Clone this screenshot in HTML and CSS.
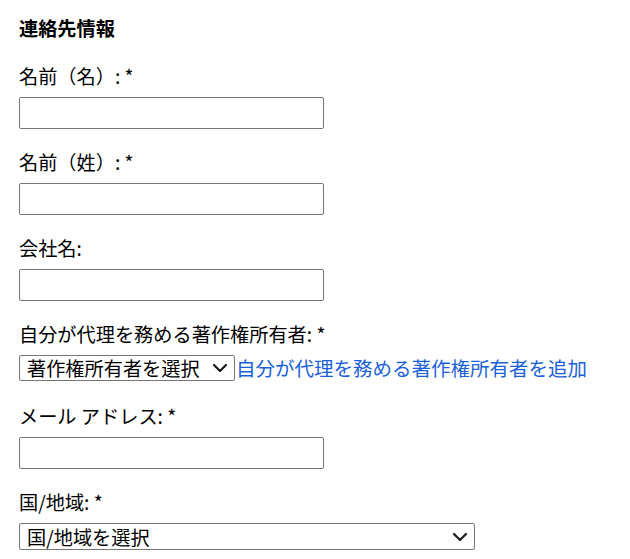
FILE: index.html
```html
<!DOCTYPE html>
<html lang="ja">
<head>
<meta charset="utf-8">
<title>連絡先情報</title>
<link rel="stylesheet" href="styles.css">
</head>
<body>
<form class="form">
  <h2 class="heading">連絡先情報</h2>
  <div class="field">
    <label class="label" for="fn">名前（名）: *</label>
    <input class="text-input" id="fn" type="text">
  </div>
  <div class="field">
    <label class="label" for="ln">名前（姓）: *</label>
    <input class="text-input" id="ln" type="text">
  </div>
  <div class="field">
    <label class="label" for="co">会社名:</label>
    <input class="text-input" id="co" type="text">
  </div>
  <div class="field">
    <label class="label" for="owner">自分が代理を務める著作権所有者: *</label>
    <div class="owner-row">
      <div class="select-wrap">
        <select class="select owner-select" id="owner">
          <option>著作権所有者を選択</option>
        </select>
        <svg class="chevron" width="14" height="8" viewBox="0 0 14 8" aria-hidden="true"><path d="M1 1 L7 7 L13 1" fill="none" stroke="#1a1a1a" stroke-width="2.2" stroke-linecap="round" stroke-linejoin="round"/></svg>
      </div><a class="add-link" href="#">自分が代理を務める著作権所有者を追加</a>
    </div>
  </div>
  <div class="field">
    <label class="label" for="em">メール アドレス: *</label>
    <input class="text-input" id="em" type="email">
  </div>
  <div class="field">
    <label class="label" for="ct">国/地域: *</label>
    <div class="select-wrap">
      <select class="select country-select" id="ct">
        <option>国/地域を選択</option>
      </select>
      <svg class="chevron" width="14" height="8" viewBox="0 0 14 8" aria-hidden="true"><path d="M1 1 L7 7 L13 1" fill="none" stroke="#1a1a1a" stroke-width="2.2" stroke-linecap="round" stroke-linejoin="round"/></svg>
    </div>
  </div>
</form>
</body>
</html>
```
FILE: styles.css
```css
html, body {
  margin: 0;
  padding: 0;
  background: #ffffff;
}

body {
  font-family: "Noto Sans CJK JP", "Noto Sans", sans-serif;
  font-size: 19.2px;
  color: #000000;
}

.form {
  display: flex;
  flex-direction: column;
  align-items: flex-start;
  padding: 15px 19px 0 19px;
}

.heading {
  margin: 0;
  font-size: 19.2px;
  font-weight: 700;
  line-height: 26px;
}

.field {
  display: flex;
  flex-direction: column;
  align-items: flex-start;
  margin-top: 20px;
}

.heading + .field {
  margin-top: 22px;
}

.label {
  display: block;
  line-height: 26px;
  margin-bottom: 8px;
}

.text-input {
  box-sizing: border-box;
  width: 305px;
  height: 32px;
  margin: 0;
  border: 1px solid #767676;
  border-radius: 2px;
  padding: 1px 4px;
  font: inherit;
}

.select-wrap {
  position: relative;
  display: flex;
}

.select {
  -webkit-appearance: none;
  appearance: none;
  box-sizing: border-box;
  margin: 0;
  font-family: inherit;
  font-size: 19.2px;
  line-height: 24px;
  color: #000000;
  border: 1px solid #767676;
  border-radius: 2px;
  background: #ffffff;
  padding: 0 34px 0 7px;
}

.chevron {
  position: absolute;
  top: 50%;
  right: 8px;
  margin-top: -4px;
  pointer-events: none;
}

.owner-row {
  display: flex;
  align-items: center;
  margin-bottom: 2px;
  line-height: 26px;
}

.owner-select {
  height: 26px;
}

.add-link {
  margin-left: 1px;
  font-size: 19.5px;
  color: #1a5fd8;
  text-decoration: none;
}

.country-select {
  width: 456px;
  height: 27px;
}
```
